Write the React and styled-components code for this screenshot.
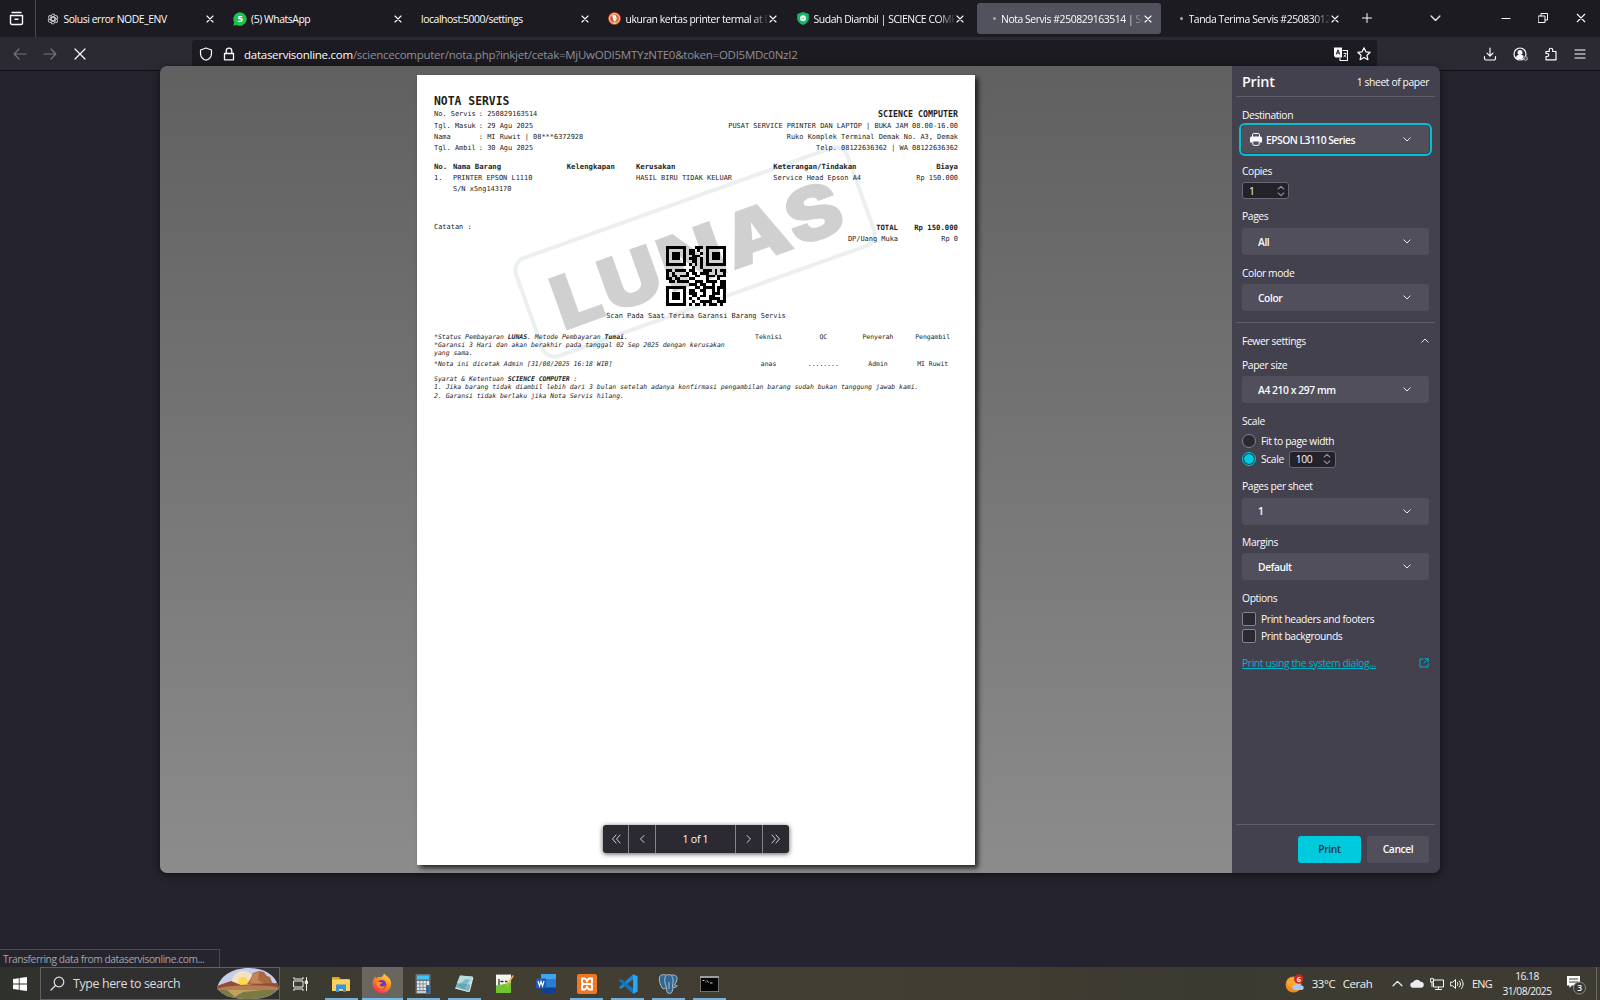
import React from "react";
import styled, { createGlobalStyle, css } from "styled-components";

const ui = `"Open Sans", "Noto Sans", sans-serif`;
const mono = `"DejaVu Sans Mono", "Liberation Mono", monospace`;

const Global = createGlobalStyle`
  *, *::before, *::after { box-sizing: border-box; }
  body { margin: 0; background: #25232d; font-family: ${ui}; color: #fbfbfe; overflow: hidden; }
  svg { display: block; flex: none; }
`;

const Screen = styled.div`
  width: 1600px;
  height: 1000px;
  display: flex;
  flex-direction: column;
  overflow: hidden;
`;

/* ---------- tab strip ---------- */
const TabStrip = styled.header`
  height: 37px;
  flex: none;
  display: flex;
  background: #1c1b22;
`;
const ViewButton = styled.div`
  width: 36px;
  border-right: 1px solid #4c4b52;
  display: flex;
  align-items: center;
  padding: 0 0 0 9px;
  margin-right: 3px;
`;
const Tab = styled.div`
  width: 184.5px;
  margin: 3px 1.5px;
  margin-left: ${(p) => (p.$first ? 0 : 1.5)}px;
  padding: 0 9.5px 0 ${(p) => p.$pad ?? 8}px;
  border-radius: 3px;
  display: flex;
  align-items: center;
  background: ${(p) => (p.$active ? "#52525e" : "transparent")};
  flex: none;
`;
const TabIcon = styled.span`
  display: flex;
  margin-right: 4.5px;
`;
const TabDot = styled.span`
  width: 3px;
  height: 3px;
  border-radius: 50%;
  background: #a9a8b0;
  margin-right: 5.5px;
  flex: none;
`;
const TabTitle = styled.span`
  flex: 1;
  min-width: 0;
  white-space: nowrap;
  font-size: 10.4px;
  line-height: 20px;
  letter-spacing: -0.43px;
  ${(p) =>
    p.$fade &&
    css`
      mask-image: linear-gradient(to right, #000 calc(100% - 18px), transparent);
    `}
`;
const StripSpacer = styled.div`
  flex: ${(p) => (p.$w ? "none" : 1)};
  width: ${(p) => (p.$w ? `${p.$w}px` : "auto")};
`;
const StripButton = styled.div`
  width: ${(p) => p.$w}px;
  display: flex;
  align-items: center;
  justify-content: center;
  padding-bottom: 1px;
`;

/* ---------- navigation bar ---------- */
const NavBar = styled.nav`
  height: 34px;
  flex: none;
  display: flex;
  align-items: center;
  background: #2b2a33;
  border-bottom: 1px solid #0f0e14;
`;
const NavButtons = styled.div`
  width: 192px;
  padding-left: 13px;
  display: flex;
  gap: 16px;
`;
const UrlField = styled.div`
  width: 1185px;
  height: 27px;
  display: flex;
  align-items: center;
  padding: 0 6px 0 7px;
  background: #1c1b22;
  border-radius: 3px;
`;
const UrlText = styled.span`
  margin-left: 8px;
  padding-top: 1px;
  flex: 1;
  font-size: 11.5px;
  letter-spacing: -0.26px;
  color: #8f8f97;
  white-space: nowrap;
`;
const Host = styled.span`
  color: #fbfbfe;
`;
const UrlIcons = styled.div`
  display: flex;
  gap: 9px;
  align-items: center;
`;
const NavTools = styled.div`
  flex: 1;
  display: flex;
  justify-content: flex-end;
  padding-right: 14px;
  gap: 16.3px;
`;

/* ---------- page area and print dialog ---------- */
const Content = styled.main`
  flex: 1;
  display: flex;
  justify-content: center;
  align-items: flex-start;
  background: #25232d;
  position: relative;
`;
const Dialog = styled.section`
  width: 1280px;
  height: 807px;
  margin-top: -5px;
  display: flex;
  border-radius: 7px;
  overflow: hidden;
  position: relative;
  box-shadow: 0 2px 8px rgba(0, 0, 0, 0.55);
`;
const Preview = styled.div`
  width: 1072px;
  background: linear-gradient(#606060, #8c8c8c);
  padding: 9px 0 0 257px;
  position: relative;
`;
const Paper = styled.article`
  width: 558px;
  height: 790px;
  background: #fff;
  box-shadow: 3px 3px 5px rgba(0, 0, 0, 0.75);
  padding: 19.3px 17px 0 17px;
  color: #1c1c1c;
  font-family: ${mono};
  font-size: 6.94px;
  position: relative;
  white-space: pre;
`;
const Stamp = styled.div`
  position: absolute;
  left: 100px;
  top: 123px;
  width: 356px;
  height: 108px;
  border: 4px solid #eceff0;
  border-radius: 15px;
  transform: rotate(-19.7deg);
  display: flex;
  align-items: center;
  justify-content: center;
  padding: 5px 0 0 4px;
`;
const StampText = styled.span`
  font-family: Inter, sans-serif;
  font-weight: 900;
  font-size: 74px;
  letter-spacing: 2.5px;
  line-height: 1;
  color: #d0d0d0;
  -webkit-text-stroke: 1px #d0d0d0;
  transform: scaleX(1.13);
`;
const Sheet = styled.div`
  position: relative;
  display: flex;
  flex-direction: column;
`;
const Split = styled.div`
  display: flex;
  justify-content: space-between;
`;
const Title = styled.h1`
  margin: 0;
  font-size: 11.4px;
  line-height: 15px;
  font-weight: 700;
`;
const Line = styled.div`
  height: 11.4px;
  line-height: 11.4px;
  display: flex;
`;
const Key = styled.span`
  width: 44.8px;
`;
const RightLines = styled.div`
  padding-top: 15px;
  display: flex;
  flex-direction: column;
  align-items: flex-end;
`;
const Company = styled.span`
  font-size: 8.3px;
  font-weight: 700;
`;
const ItemGrid = styled.div`
  display: grid;
  grid-template-columns: 19px 113.7px 69.3px 137.3px 1fr auto;
  line-height: 11.4px;
  ${(p) =>
    p.$head &&
    css`
      font-size: 7.28px;
      font-weight: 700;
      margin-top: 6.5px;
    `}
`;
const Totals = styled.div`
  display: grid;
  grid-template-columns: 1fr auto 60px;
  line-height: 11.6px;
  margin-top: ${(p) => p.$mt ?? 0}px;
`;
const Amount = styled.span`
  text-align: right;
  ${(p) =>
    p.$bold &&
    css`
      font-weight: 700;
      font-size: 7.28px;
    `}
`;
const QrBlock = styled.div`
  display: flex;
  flex-direction: column;
  align-items: center;
  gap: 4px;
  line-height: 12px;
`;
const Footer = styled.div`
  display: flex;
  margin-top: 10.6px;
  justify-content: space-between;
`;
const Notes = styled.div`
  font-style: italic;
  font-size: 6.44px;
  line-height: 8.4px;
`;
const NoteLast = styled.div`
  margin-top: 2.2px;
`;
const Terms = styled(Notes)`
  margin-top: 6.6px;
`;
const Signatures = styled.div`
  display: grid;
  grid-template-columns: repeat(4, 54.7px);
  grid-auto-rows: 8.4px;
  row-gap: 19px;
  text-align: center;
  line-height: 8.4px;
  font-size: 6.44px;
  margin-right: -2px;
`;

const Pager = styled.div`
  position: absolute;
  left: 443px;
  top: 759.3px;
  width: 186px;
  height: 28px;
  display: flex;
  background: #2b2a33;
  border-radius: 3px;
  box-shadow: 0 1px 5px rgba(0, 0, 0, 0.65);
`;
const PagerCell = styled.div`
  width: ${(p) => p.$w}px;
  display: flex;
  align-items: center;
  justify-content: center;
  font-size: 10.6px;
  letter-spacing: -0.3px;
  color: #fbfbfe;
  border-left: ${(p) => (p.$first ? "none" : "1px solid #85848d")};
`;

/* ---------- settings panel ---------- */
const Panel = styled.aside`
  width: 208px;
  background: #42414d;
  padding: 0 5px 0 4px;
  display: flex;
  flex-direction: column;
  font-size: 10.3px;
  letter-spacing: -0.38px;
`;
const PanelHead = styled.div`
  height: 30.5px;
  display: flex;
  align-items: center;
  justify-content: space-between;
  padding: 2px 6px 0;
  border-bottom: 1px solid #5f5e69;
`;
const PanelTitle = styled.h2`
  margin: 0;
  font-size: 14.4px;
  font-weight: 600;
  letter-spacing: -0.25px;
`;
const Form = styled.div`
  padding: 0 6px;
  display: flex;
  flex-direction: column;
  flex: 1;
`;
const Label = styled.div`
  line-height: 14px;
  margin-top: ${(p) => p.$mt}px;
  margin-bottom: ${(p) => p.$mb ?? 5}px;
  display: flex;
  justify-content: space-between;
  align-items: center;
`;
const Select = styled.div`
  height: 27px;
  border-radius: 3px;
  background: #504f5b;
  display: flex;
  align-items: center;
  justify-content: space-between;
  padding: 0 18px 0 ${(p) => (p.$icon ? 8 : 16)}px;
  font-weight: 600;
  ${(p) =>
    p.$focus &&
    css`
      outline: 2px solid #00c0d4;
      outline-offset: 1.5px;
    `}
`;
const SelectValue = styled.span`
  display: flex;
  align-items: center;
  gap: 4px;
  letter-spacing: ${(p) => p.$ls ?? -0.42}px;
`;
const NumberInput = styled.div`
  width: 47px;
  height: 17px;
  border: 1px solid #6a6973;
  border-radius: 3px;
  background: #23222b;
  display: flex;
  align-items: center;
  justify-content: space-between;
  padding: 0 3.5px 0 6px;
`;
const Rule = styled.hr`
  width: 199px;
  margin: ${(p) => p.$mt ?? 0}px 0 0 -6px;
  border: 0;
  border-top: 1px solid #5f5e69;
`;
const Choice = styled.div`
  height: 17.7px;
  display: flex;
  align-items: center;
  gap: 5px;
`;
const Radio = styled.span`
  width: 14px;
  height: 14px;
  border-radius: 50%;
  border: 1px solid ${(p) => (p.$on ? "#00c8dc" : "#85848d")};
  background: ${(p) => (p.$on ? "radial-gradient(circle, #00cadd 0 4.4px, #14525f 5.2px)" : "#2b2a33")};
`;
const Check = styled.span`
  width: 14px;
  height: 14px;
  border-radius: 2px;
  border: 1px solid #85848d;
  background: #2b2a33;
`;
const SystemLink = styled.div`
  margin-top: 10.5px;
  display: flex;
  align-items: center;
  justify-content: space-between;
  color: #00b4c8;
  line-height: 15px;
`;
const LinkText = styled.span`
  text-decoration: underline;
`;
const Actions = styled.div`
  border-top: 1px solid #5f5e69;
  height: 49.5px;
  display: flex;
  justify-content: flex-end;
  gap: 6px;
  padding: 11.3px 6px 0;
`;
const Button = styled.button`
  width: ${(p) => p.$w}px;
  height: 27px;
  border: 0;
  padding: 0;
  border-radius: 3px;
  font-family: ${ui};
  font-size: 10.3px;
  font-weight: 600;
  letter-spacing: -0.4px;
  background: ${(p) => (p.$primary ? "#00cadd" : "#504f5b")};
  color: ${(p) => (p.$primary ? "#23303c" : "#fbfbfe")};
`;
const LoadStatus = styled.div`
  position: absolute;
  left: 0;
  bottom: 0;
  width: 220px;
  height: 18px;
  border: 1px solid #4c4b55;
  border-width: 1px 1px 0 0;
  background: #26252e;
  padding-left: 3px;
  line-height: 18px;
  font-size: 10.2px;
  letter-spacing: -0.4px;
  color: #a5a5aa;
  white-space: nowrap;
`;

/* ---------- taskbar ---------- */
const Taskbar = styled.footer`
  height: 33px;
  flex: none;
  display: flex;
  background: linear-gradient(to right, #2f322b 0, #3c3b31 300px, #423e32 520px, #403d32 1000px, #3b3a31 1200px, #3e3b33);
  font-size: 11.4px;
`;
const StartButton = styled.div`
  width: 40px;
  display: flex;
  align-items: center;
  justify-content: center;
`;
const SearchBox = styled.div`
  width: 240px;
  display: flex;
  align-items: center;
  background: #303030;
  border: 1px solid #61625f;
  padding-left: 9px;
  font-size: 12.4px;
  letter-spacing: -0.36px;
  color: #dedede;
`;
const SearchText = styled.span`
  flex: 1;
  margin-left: 8px;
`;
const TaskItem = styled.div`
  width: 40.9px;
  display: flex;
  align-items: center;
  justify-content: center;
  background: ${(p) => (p.$active ? "#69665f" : "transparent")};
  box-shadow: ${(p) => (p.$active ? "inset 0 -2px #76b9ed" : "none")};
`;
const TaskMark = styled.span`
  width: 33px;
  height: 33px;
  display: flex;
  align-items: center;
  justify-content: center;
  border-bottom: ${(p) => (p.$open ? "2px solid #76b0dc" : "0")};
  padding-top: ${(p) => (p.$open ? 2 : 0)}px;
`;
const Tray = styled.div`
  flex: 1;
  display: flex;
  align-items: center;
  justify-content: flex-end;
  color: #f2f2f2;
`;
const TrayPart = styled.span`
  display: flex;
  align-items: center;
  justify-content: center;
  width: ${(p) => p.$w}px;
  margin-right: ${(p) => p.$mr ?? 0}px;
  flex: none;
  white-space: nowrap;
  letter-spacing: -0.4px;
`;
const Language = styled(TrayPart)`
  font-size: 10.8px;
  letter-spacing: -0.7px;
`;
const Clock = styled.div`
  width: 56px;
  text-align: center;
  font-size: 10.2px;
  letter-spacing: -0.5px;
  line-height: 15px;
`;
const DesktopEdge = styled.span`
  width: 4px;
  height: 33px;
  border-left: 1px solid #6c6b63;
`;

/* ---------- icons ---------- */
const Stroke = ({ w = 16, h = 16, vb, c = "#fbfbfe", s = 1.2, children }) => (
  <svg width={w} height={h} viewBox={vb || `0 0 ${w} ${h}`} fill="none" stroke={c} strokeWidth={s} strokeLinecap="round" strokeLinejoin="round">
    {children}
  </svg>
);
const Close = ({ size = 8, s = 1.15 }) => (
  <Stroke w={size} h={size} vb="0 0 8 8" s={s}>
    <path d="M1 1l6 6M7 1L1 7" />
  </Stroke>
);
const Chevron = ({ up, c = "#e8e8ec", w = 8 }) => (
  <Stroke w={w} h={w * 0.625} vb="0 0 8 5" c={c} s={1}>
    <path d={up ? "M.8 4.2L4 1l3.2 3.2" : "M.8.8L4 4 7.2.8"} />
  </Stroke>
);
const Spin = () => (
  <Stroke w={8} h={12} c="#8f8e97" s={1.1}>
    <path d="M1.2 4L4 1.3 6.8 4M1.2 8L4 10.7 6.8 8" />
  </Stroke>
);
const GptIcon = () => (
  <Stroke w={12} h={12} vb="0 0 24 24" c="#c9c9cd" s={2}>
    {[0, 60, 120, 180, 240, 300].map((a) => (
      <path key={a} transform={`rotate(${a} 12 12)`} d="M8.2 13.8V6.2A4.3 4.3 0 0 1 15.8 3.6M12 7.6l5.8 3.4" />
    ))}
  </Stroke>
);
const WaIcon = () => (
  <svg width="14" height="14" viewBox="0 0 14 14">
    <path d="M7 .3a6.7 6.7 0 1 1-3.2 12.6L.3 13.7l.9-3.4A6.7 6.7 0 0 1 7 .3z" fill="#1fc04e" />
    <text x="7.1" y="10.3" fontSize="9.5" fontWeight="700" fill="#fff" textAnchor="middle" fontFamily="Open Sans, sans-serif">5</text>
  </svg>
);
const DuckIcon = () => (
  <svg width="13" height="13" viewBox="0 0 13 13">
    <circle cx="6.5" cy="6.5" r="6.3" fill="#de5833" />
    <circle cx="6.5" cy="6.5" r="4.9" fill="none" stroke="#fff" strokeWidth=".8" />
    <path d="M4.4 3.2c2-1 4 .2 4.1 2.3.1 1.5-.6 2 .2 5.3H6.3C5.5 8 4.3 4.6 4.4 3.2z" fill="#fff" />
    <path d="M7 6.2h2.6v1H7z" fill="#f9c23c" />
    <path d="M6.5 8.8h2.8v1.6H6.5z" fill="#4cba3c" />
  </svg>
);
const ShieldGreen = () => (
  <svg width="12" height="13" viewBox="0 0 12 13">
    <path d="M6 0l5.8 2v4.5C11.8 9.5 9 12 6 13 3 12 .2 9.500.2 6.500V2z" fill="#12b76a" />
    <circle cx="6" cy="6.300" r="3" fill="#e9fff3" />
    <path d="M4.800 6.300l.9.900 1.500-1.700" stroke="#12b76a" strokeWidth=".8" fill="none" />
  </svg>
);

const QR = [
  "111111100011101111111",
  "100000101101001000001",
  "101110101100101011101",
  "101110100111001011101",
  "101110101110101011101",
  "100000100110101000001",
  "111111101010101111111",
  "000000000100100000000",
  "110111101100011101011",
  "101000010110111001001",
  "101101110011001110111",
  "110110001100001000100",
  "011011110011101111011",
  "000000001110110010011",
  "111111100011011110111",
  "100000101100110010101",
  "101110101110010011101",
  "101110100110110110001",
  "101110101001000111101",
  "100000100100111100111",
  "111111101011010111010",
];
const QrCode = () => (
  <svg width="60" height="60" viewBox="0 0 21 21" shapeRendering="crispEdges">
    {QR.flatMap((row, y) => [...row].map((m, x) => (m === "1" ? <rect key={`${x}-${y}`} x={x} y={y} width="1" height="1" fill="#000" /> : null)))}
  </svg>
);

/* taskbar application icons */
const FolderIcon = () => (
  <svg width="20" height="18" viewBox="0 0 20 18">
    <path d="M1 2h7l1.5 2H18v12H1z" fill="#e8a317" />
    <path d="M1 4.5h18V16H1z" fill="#fbd25e" />
    <path d="M5 17V9.5h10V17h-3v-3H8v3z" fill="#3a94dc" />
  </svg>
);
const FirefoxIcon = () => (
  <svg width="20" height="21" viewBox="0 0 20 21">
    <defs>
      <linearGradient id="fx" x1=".8" y1="0" x2=".2" y2="1">
        <stop offset="0" stopColor="#ffe04a" />
        <stop offset=".45" stopColor="#ff8a1e" />
        <stop offset="1" stopColor="#f5265e" />
      </linearGradient>
    </defs>
    <path d="M12 .5c1 2 4.500 3 6.200 6.200C21 12.500 17 20 10 20S-.5 14 .8 8.500C1.300 6 2.500 4.500 3.500 3.500c0 1 .2 1.500.6 2 1.400-1.400 3-1.700 4.400-1.500C10.500 4 11.500 2.500 12 .5z" fill="url(#fx)" />
    <circle cx="9.700" cy="11.500" r="4.500" fill="#6a37c9" />
    <path d="M4.500 9c2-1.500 3.500.6 6 .2-.4 1.600-2.500 1.400-2.500 3 0 1.300 3 2.300 5 0 0 3-3 4.300-5.500 3.300S4 12 4.500 9z" fill="#ff8f1f" />
  </svg>
);
const CalcIcon = () => (
  <svg width="16" height="20" viewBox="0 0 16 20">
    <rect x=".5" y="0" width="15" height="20" fill="#6a7078" />
    <rect x="2" y="1.5" width="12" height="4" fill="#3fc6f2" />
    {[7, 10.3, 13.6].map((y) => [2, 5.2, 8.4].map((x) => <rect key={`${x}${y}`} x={x} y={y} width="2.5" height="2.6" fill="#e4e8ec" />))}
    <rect x="2" y="17" width="9" height="2" fill="#c6cbd0" />
    <rect x="11.6" y="7" width="2.5" height="4" fill="#e4e8ec" />
    <rect x="11.6" y="11.5" width="2.5" height="7.3" fill="#1d63b8" />
  </svg>
);
const NotepadIcon = () => (
  <svg width="20" height="20" viewBox="0 0 20 20">
    <path d="M6 1.500l12.500 1L14.500 18 1 14.500z" fill="#7cb9c4" />
    <path d="M6 1.500l12.500 1-2 8L3 9z" fill="#b5dde2" />
    <path d="M14.500 18l4-15.500.8 1.500-3.500 13.500z" fill="#e8f2f2" />
    <path d="M1 14.500L14.500 18l1.300-.5L2 13.500z" fill="#dfe8e8" />
    <path d="M3 12l9-7 4 .5-6 10z" fill="#4c93a3" opacity=".5" />
  </svg>
);
const NppIcon = () => (
  <svg width="19" height="21" viewBox="0 0 19 21">
    <path d="M1 1.500h15V20H1z" fill="#f4f6ee" />
    <path d="M1 12.500c5-1 10-2 15-3V20H1z" fill="#6ec52d" />
    <path d="M4 6v6M5.500 8.500h3M10 8.500h2.500" stroke="#333" strokeWidth="1.300" />
    <path d="M17.500 2l-6 10-1 2.500 2-1.500L19 3z" fill="#f0a92c" />
    <path d="M2 1.500h1.500M5 1.500h1.500M8 1.500h1.500M11 1.500h1.500" stroke="#777" />
  </svg>
);
const WordIcon = () => (
  <svg width="20" height="19" viewBox="0 0 20 19">
    <rect x="5" y="0" width="15" height="19" rx="1" fill="#2b7cd3" />
    <rect x="5" y="0" width="15" height="5" fill="#41a5ee" />
    <rect x="5" y="13.5" width="15" height="5.5" fill="#103f91" />
    <rect x="0" y="4.5" width="10" height="10" rx="1" fill="#185abd" />
    <path d="M2 7l1.5 5L5 7.5 6.5 12 8 7" stroke="#fff" fill="none" strokeWidth="1.2" />
  </svg>
);
const XamppIcon = () => (
  <svg width="20" height="20" viewBox="0 0 20 20">
    <rect width="20" height="20" rx="2" fill="#f37623" />
    <path d="M5 4.500h2.500c1.500 0 2 1.500 2.500 3 .5-1.500 1-3 2.500-3H15v3.500c0 1.500-1 2-2 2 1 0 2 .5 2 2v3.500h-2.500c-1.500 0-2-1.500-2.500-3-.5 1.500-1 3-2.500 3H5V12c0-1.500 1-2 2-2-1 0-2-.5-2-2zM7.500 10h5" fill="none" stroke="#fff" strokeWidth="2" strokeLinejoin="round" />
  </svg>
);
const CodeIcon = () => (
  <svg width="20" height="20" viewBox="0 0 20 20">
    <path d="M15 .2l4.600 2v15.600l-4.600 2V.2z" fill="#29a5f3" />
    <path d="M15 .2v5.300L3.200 15 .6 13.400z" fill="#1c86d1" />
    <path d="M15 19.800v-5.300L3.200 5 .6 6.600z" fill="#0f76bd" />
  </svg>
);
const PgIcon = () => (
  <svg width="20" height="20" viewBox="0 0 20 20">
    <path d="M2.500 1.500C5 0 7 .8 8 1.200c2-1 4-.5 5 0C16 .5 19 1.500 19 4.500c0 2.500-1.500 5-2.500 6.500.5 1 2 .5 2.800.7-.8 1.800-3.300 2-4.300 1.500-.2 2.500-.5 6-3.500 6.300-2.800 0-3-3-3-6-1.500 1-3 1.800-4 .8C2 11 0 4 2.500 1.500z" fill="#336791" stroke="#b9cad8" strokeWidth=".9" />
    <path d="M8 1.500C6 4 6.500 9 8.500 13M13 1.500c2.500 2 2.500 6 1.500 9.500v2M11 8v7" fill="none" stroke="#c6d5e0" strokeWidth=".8" />
  </svg>
);
const CmdIcon = () => (
  <svg width="19" height="16" viewBox="0 0 19 16">
    <rect width="19" height="16" fill="#9d9d9d" />
    <rect x=".7" y="2" width="17.6" height="13.3" fill="#050505" />
    <path d="M2.5 4.500h2M5.500 6h.8M7 4.500l1.500 2M10 7h2.500" stroke="#e6e6e6" strokeWidth=".9" />
  </svg>
);
const DesertPicture = () => (
  <svg width="62" height="31" viewBox="0 0 62 31">
    <defs>
      <clipPath id="dome">
        <path d="M0 21C2 9 14 0 32 0s28 9 30 21c-4 1-5 10-30 10S5 24 0 21z" />
      </clipPath>
    </defs>
    <g clipPath="url(#dome)">
      <rect width="62" height="31" fill="#c9cdec" />
      <circle cx="26" cy="14" r="11" fill="#f3e3c2" />
      <circle cx="26" cy="14" r="5" fill="#ffd84d" />
      <path d="M30 16l4-6 2-5 6-2 5 1 3 4 3 1 2 5 5 6z" fill="#a96a42" />
      <path d="M33 15l3-9 6-2-1 8 6 4z" fill="#c68557" />
      <path d="M0 18l8-3 6-2 10 4 14-1 24-1v7H0z" fill="#8e4f35" />
      <path d="M2 20c16-4 40-3 58-1l2 3H0z" fill="#b67c55" />
      <path d="M0 22h62v9H0z" fill="#7b7a45" />
      <path d="M10 22l8 7 8-5 20-2z" fill="#c0a15e" />
    </g>
  </svg>
);

const apps = [
  { name: "files", icon: <FolderIcon />, open: true },
  { name: "firefox", icon: <FirefoxIcon />, active: true },
  { name: "calc", icon: <CalcIcon />, open: true },
  { name: "notepad", icon: <NotepadIcon />, open: true },
  { name: "npp", icon: <NppIcon /> },
  { name: "word", icon: <WordIcon /> },
  { name: "xampp", icon: <XamppIcon />, open: true },
  { name: "code", icon: <CodeIcon />, open: true },
  { name: "pg", icon: <PgIcon />, open: true },
  { name: "cmd", icon: <CmdIcon />, open: true },
];

const tabs = [
  { title: "Solusi error NODE_ENV", icon: <GptIcon />, first: true },
  { title: "(5) WhatsApp", icon: <WaIcon />, pad: 6 },
  { title: "localhost:5000/settings", pad: 7 },
  { title: "ukuran kertas printer termal at D", icon: <DuckIcon />, fade: true, pad: 6.5 },
  { title: "Sudah Diambil | SCIENCE COMP", icon: <ShieldGreen />, fade: true },
  { title: "Nota Servis #250829163514 | SC", dot: true, active: true, fade: true, pad: 16 },
  { title: "Tanda Terima Servis #25083012", dot: true, fade: true, pad: 16 },
];

const SelectBox = ({ value, icon, focus, ls }) => (
  <Select $icon={!!icon} $focus={focus}>
    <SelectValue $ls={ls}>
      {icon}
      {value}
    </SelectValue>
    <Chevron />
  </Select>
);

function Receipt() {
  return (
    <Paper>
      <Stamp><StampText>LUNAS</StampText></Stamp>
      <Sheet>
        <Split>
          <div>
            <Title>NOTA SERVIS</Title>
            <Line><Key>No. Servis</Key>: 250829163514</Line>
            <Line><Key>Tgl. Masuk</Key>: 29 Agu 2025</Line>
            <Line><Key>Nama</Key>: MI Ruwit | 08***6372928</Line>
            <Line><Key>Tgl. Ambil</Key>: 30 Agu 2025</Line>
          </div>
          <RightLines>
            <Line><Company>SCIENCE COMPUTER</Company></Line>
            <Line>PUSAT SERVICE PRINTER DAN LAPTOP | BUKA JAM 08.00-16.00</Line>
            <Line>Ruko Komplek Terminal Demak No. A3, Demak</Line>
            <Line>Telp. 08122636362 | WA 08122636362</Line>
          </RightLines>
        </Split>
        <ItemGrid $head>
          <span>No.</span>
          <span>Nama Barang</span>
          <span>Kelengkapan</span>
          <span>Kerusakan</span>
          <span>Keterangan/Tindakan</span>
          <span>Biaya</span>
        </ItemGrid>
        <ItemGrid>
          <span>1.</span>
          <span>{"PRINTER EPSON L1110\nS/N x5ng143170"}</span>
          <span />
          <span>HASIL BIRU TIDAK KELUAR</span>
          <span>Service Head Epson A4</span>
          <span>Rp 150.000</span>
        </ItemGrid>
        <Totals $mt={26.5}>
          <span>Catatan :</span>
          <Amount $bold>TOTAL</Amount>
          <Amount $bold>Rp 150.000</Amount>
        </Totals>
        <Totals $mt={0.7}>
          <span />
          <Amount>DP/Uang Muka</Amount>
          <Amount>Rp 0</Amount>
        </Totals>
        <QrBlock>
          <QrCode />
          <span>Scan Pada Saat Terima Garansi Barang Servis</span>
        </QrBlock>
        <Footer>
          <Notes>
            <div>*Status Pembayaran <b>LUNAS</b>. Metode Pembayaran <b>Tunai</b>.</div>
            <div>*Garansi 3 Hari dan akan berakhir pada tanggal 02 Sep 2025 dengan kerusakan</div>
            <div>yang sama.</div>
            <NoteLast>*Nota ini dicetak Admin [31/08/2025 16:18 WIB]</NoteLast>
          </Notes>
          <Signatures>
            <span>Teknisi</span>
            <span>QC</span>
            <span>Penyerah</span>
            <span>Pengambil</span>
            <span>anas</span>
            <span>........</span>
            <span>Admin</span>
            <span>MI Ruwit</span>
          </Signatures>
        </Footer>
        <Terms>
          <div>Syarat & Ketentuan <b>SCIENCE COMPUTER</b> :</div>
          <div>1. Jika barang tidak diambil lebih dari 3 bulan setelah adanya konfirmasi pengambilan barang sudah bukan tanggung jawab kami.</div>
          <div>2. Garansi tidak berlaku jika Nota Servis hilang.</div>
        </Terms>
      </Sheet>
    </Paper>
  );
}

export default function App() {
  return (
    <Screen>
      <Global />
      <TabStrip>
        <ViewButton>
          <Stroke w={15} h={15} s={1.4}>
            <path d="M3 1.500h9M1.500 4.500h12V12a1.500 1.500 0 0 1-1.500 1.500H3A1.500 1.500 0 0 1 1.500 12zM6 8.300h3" />
          </Stroke>
        </ViewButton>
        {tabs.map((t) => (
          <Tab key={t.title} $active={t.active} $first={t.first} $pad={t.pad}>
            {t.dot && <TabDot />}
            {t.icon && <TabIcon>{t.icon}</TabIcon>}
            <TabTitle $fade={t.fade}>{t.title}</TabTitle>
            <Close />
          </Tab>
        ))}
        <StripButton $w={33}>
          <Stroke w={10} h={10} s={1}><path d="M5 .5v9M.5 5h9" /></Stroke>
        </StripButton>
        <StripSpacer />
        <StripButton $w={36}><Chevron w={11} /></StripButton>
        <StripSpacer $w={34} />
        <StripButton $w={37}>
          <Stroke w={10} h={10} s={1}><path d="M1 5.500h8" /></Stroke>
        </StripButton>
        <StripButton $w={38}>
          <Stroke w={10} h={10} s={1}><path d="M.5 3h6.500v6.500H.5zM3 3V.5h6.500V7H7" /></Stroke>
        </StripButton>
        <StripButton $w={38}><Close size={10} s={0.9} /></StripButton>
      </TabStrip>

      <NavBar>
        <NavButtons>
          <Stroke w={14} h={14} c="#74737c"><path d="M13 7H1.500M6 2L1.200 7 6 12" /></Stroke>
          <Stroke w={14} h={14} c="#74737c"><path d="M1 7h11.500M8 2l4.800 5L8 12" /></Stroke>
          <Stroke w={14} h={14}><path d="M2 2l10 10M12 2L2 12" /></Stroke>
        </NavButtons>
        <UrlField>
          <Stroke w={14} h={14}>
            <path d="M7 1l5.500 2v3.500C12.500 10 10 12.300 7 13.300 4 12.300 1.500 10 1.500 6.500V3z" />
          </Stroke>
          <Stroke w={23} h={14} vb="-9 0 23 14" s={1.3}>
            <path d="M2.500 6.500h9v6.300h-9zM4.200 6.500V4a2.800 2.800 0 0 1 5.600 0v2.500" />
          </Stroke>
          <UrlText>
            <Host>dataservisonline.com</Host>/sciencecomputer/nota.php?inkjet/cetak=MjUwODI5MTYzNTE0&token=ODI5MDc0NzI2
          </UrlText>
          <UrlIcons>
            <svg width="14" height="14" viewBox="0 0 14 14">
              <path d="M0 .5h8v10H1.500L0 9z" fill="#fbfbfe" />
              <path d="M2.200 7.500L4 2.800l1.800 4.700M2.900 6h2.300" fill="none" stroke="#1c1b22" strokeWidth="1" />
              <path d="M8.500 3.500h5v10H6V11" fill="none" stroke="#fbfbfe" strokeWidth="1.100" />
              <path d="M9.500 6.500h3M11 5.500v1M12 6.500c-.3 2-1.300 3-2.500 3.500M10 8l2.200 2.500" fill="none" stroke="#fbfbfe" strokeWidth=".8" />
            </svg>
            <Stroke w={14} h={14}>
              <path d="M7 .8l1.900 4 4.300.5-3.200 3 .9 4.400L7 10.500l-3.900 2.200.9-4.400-3.200-3 4.300-.5z" />
            </Stroke>
          </UrlIcons>
        </UrlField>
        <NavTools>
          <Stroke w={14} h={14}><path d="M7 1v8M4 6.200l3 3 3-3M1.500 9.500v2a1.500 1.500 0 0 0 1.500 1.500h8a1.500 1.500 0 0 0 1.500-1.500v-2" /></Stroke>
          <Stroke w={15} h={14}>
            <circle cx="7" cy="7" r="6" />
            <circle cx="7" cy="5.600" r="1.900" fill="#fbfbfe" />
            <path d="M3.600 10c.6-1.300 1.500-1.700 3.400-1.700 1.500 0 2.500.2 3 1L9 11.300H4.500z" fill="#fbfbfe" />
            <circle cx="12.700" cy="11.500" r="1.700" fill="#2b2a33" stroke="#a09fa8" />
          </Stroke>
          <Stroke w={13} h={14}><path d="M1 12.800V9.500h1.200a1.400 1.400 0 0 0 0-3H1V4.500h3.200V3a1.700 1.700 0 0 1 3.500 0v1.500H11v8.300z" /></Stroke>
          <Stroke w={12} h={14}><path d="M1 3h10M1 7h10M1 11h10" /></Stroke>
        </NavTools>
      </NavBar>

      <Content>
        <Dialog>
          <Preview>
            <Receipt />
            <Pager>
              <PagerCell $w={25} $first>
                <Stroke w={10} h={10} c="#cfcfd4" s={1}><path d="M5 1L1.500 5 5 9M9 1L5.500 5 9 9" /></Stroke>
              </PagerCell>
              <PagerCell $w={27}>
                <Stroke w={8} h={10} c="#cfcfd4" s={1}><path d="M6 1.500L2.500 5 6 8.500" /></Stroke>
              </PagerCell>
              <PagerCell $w={80}>1 of 1</PagerCell>
              <PagerCell $w={27}>
                <Stroke w={8} h={10} c="#cfcfd4" s={1}><path d="M2 1.500L5.500 5 2 8.500" /></Stroke>
              </PagerCell>
              <PagerCell $w={27}>
                <Stroke w={10} h={10} c="#cfcfd4" s={1}><path d="M1 1l3.500 4L1 9M5 1l3.500 4L5 9" /></Stroke>
              </PagerCell>
            </Pager>
          </Preview>
          <Panel>
            <PanelHead>
              <PanelTitle>Print</PanelTitle>
              <span>1 sheet of paper</span>
            </PanelHead>
            <Form>
              <Label $mt={11.3} $mb={4.5}>Destination</Label>
              <SelectBox
                focus
                value="EPSON L3110 Series"
                ls={-0.52}
                icon={
                  <svg width="12" height="13" viewBox="0 0 12 13">
                    <path d="M2.500 4V1.800C2.500 1 3 .5 3.700.5h4.600c.7 0 1.200.5 1.200 1.300V4" fill="none" stroke="#fbfbfe" />
                    <path d="M1.500 3.500h9A1.500 1.500 0 0 1 12 5v4.500H9.500V8h-7v1.500H0V5a1.500 1.500 0 0 1 1.500-1.500z" fill="#fbfbfe" />
                    <path d="M2.800 8v3.300c0 .6.400 1 1 1h4.400c.6 0 1-.4 1-1V8z" fill="none" stroke="#fbfbfe" />
                  </svg>
                }
              />
              <Label $mt={10.4} $mb={4.6}>Copies</Label>
              <NumberInput>1<Spin /></NumberInput>
              <Label $mt={10}>Pages</Label>
              <SelectBox value="All" />
              <Label $mt={10.5} $mb={4.3}>Color mode</Label>
              <SelectBox value="Color" />
              <Rule $mt={10.5} />
              <Label $mt={11} $mb={3.5}>Fewer settings<Chevron up /></Label>
              <Label $mt={7} $mb={4}>Paper size</Label>
              <SelectBox value="A4 210 x 297 mm" />
              <Label $mt={10.5}>Scale</Label>
              <Choice><Radio />Fit to page width</Choice>
              <Choice>
                <Radio $on />Scale
                <NumberInput>100<Spin /></NumberInput>
              </Choice>
              <Label $mt={10.9} $mb={4.7}>Pages per sheet</Label>
              <SelectBox value="1" />
              <Label $mt={10.3} $mb={4.5}>Margins</Label>
              <SelectBox value="Default" />
              <Label $mt={10.5}>Options</Label>
              <Choice><Check />Print headers and footers</Choice>
              <Choice><Check />Print backgrounds</Choice>
              <SystemLink>
                <LinkText>Print using the system dialog...</LinkText>
                <Stroke w={10} h={10} c="#00b4c8" s={1}><path d="M4 1H1v8h8V6M6 .8h3.200V4M9 1L5 5" /></Stroke>
              </SystemLink>
            </Form>
            <Actions>
              <Button $primary $w={63}>Print</Button>
              <Button $w={62}>Cancel</Button>
            </Actions>
          </Panel>
        </Dialog>
        <LoadStatus>Transferring data from dataservisonline.com...</LoadStatus>
      </Content>

      <Taskbar>
        <StartButton>
          <svg width="14" height="14" viewBox="0 0 14 14" fill="#fff">
            <path d="M0 2l5.800-.8v5.400H0zM6.600 1.100L14 0v6.600H6.600zM0 7.400h5.800v5.400L0 12zM6.600 7.400H14V14l-7.400-1.100z" />
          </svg>
        </StartButton>
        <SearchBox>
          <Stroke w={15} h={15} c="#e2e2e2"><circle cx="9" cy="6" r="4.800" /><path d="M5.500 9.500L1 14" /></Stroke>
          <SearchText>Type here to search</SearchText>
          <DesertPicture />
        </SearchBox>
        <TaskItem>
          <Stroke w={15} h={14} c="#f2f2f2" s={1}>
            <path d="M1 .5V2h9V.5M1 13.500V12h9v1.500M1 4h9v6H1zM13.500.5v13" />
            <rect x="12.600" y="4" width="1.800" height="2.500" fill="#f2f2f2" />
          </Stroke>
        </TaskItem>
        {apps.map((a) => (
          <TaskItem key={a.name} $active={a.active}>
            <TaskMark $open={a.open}>{a.icon}</TaskMark>
          </TaskItem>
        ))}
        <Tray>
          <TrayPart $w={20} $mr={6}>
            <svg width="20" height="20" viewBox="0 0 20 20">
              <circle cx="8.500" cy="10.500" r="8" fill="#f08a1d" />
              <circle cx="7" cy="8.500" r="5" fill="#f6a832" />
              <path d="M9 16a2.400 2.400 0 0 1 .5-4.700 3.500 3.500 0 0 1 6.500.2A2.300 2.300 0 0 1 17 16z" fill="#a9c8f5" />
              <circle cx="13.700" cy="5" r="4.700" fill="#d0281f" />
              <text x="13.700" y="7.700" fontSize="7.500" fontWeight="700" fill="#fff" textAnchor="middle" fontFamily="Open Sans, sans-serif">6</text>
            </svg>
          </TrayPart>
          <TrayPart $w={25} $mr={7}>33°C</TrayPart>
          <TrayPart $w={29} $mr={13}>Cerah</TrayPart>
          <TrayPart $w={24}><Chevron up w={11} /></TrayPart>
          <TrayPart $w={16}>
            <svg width="14" height="9" viewBox="0 0 14 9">
              <path d="M3.200 8.800A2.800 2.800 0 0 1 3 3.200 4.200 4.200 0 0 1 10.500 2.800 3 3 0 0 1 11 8.800z" fill="#ececec" />
            </svg>
          </TrayPart>
          <TrayPart $w={24}>
            <Stroke w={14} h={12} s={1}><path d="M4 2h9.500v7H3.500V5M8.500 9v2.500M5.500 11.500h6M.7.7H3.500V4H.7zM2 4v4.500" /></Stroke>
          </TrayPart>
          <TrayPart $w={16}>
            <Stroke w={14} h={12} s={1}><path d="M.7 4.200h2L5.500 1.500v9L2.700 7.800h-2zM7.500 4.500c.7 1 .7 2 0 3M9.500 3c1.400 2 1.400 4 0 6M11.500 1.500c2.200 3 2.200 6 0 9" /></Stroke>
          </TrayPart>
          <Language $w={34}>ENG</Language>
          <Clock>16.18<br />31/08/2025</Clock>
          <TrayPart $w={41}>
            <svg width="20" height="22" viewBox="0 0 20 22">
              <path d="M1 3h13v9.500H6L3.500 15v-2.500H1z" fill="#fff" />
              <path d="M3 6h9M3 9h9" stroke="#3e3b33" />
              <circle cx="13.500" cy="15" r="6" fill="#3a3934" stroke="#8b8a86" />
              <text x="13.500" y="18" fontSize="8.500" fontWeight="600" fill="#fff" textAnchor="middle" fontFamily="Open Sans, sans-serif">3</text>
            </svg>
          </TrayPart>
          <DesktopEdge />
        </Tray>
      </Taskbar>
    </Screen>
  );
}
